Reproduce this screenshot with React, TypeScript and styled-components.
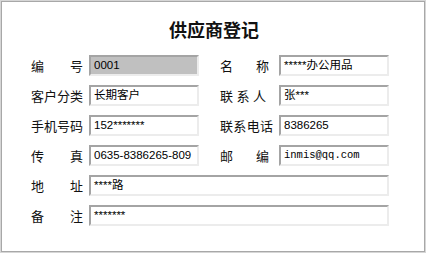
import React, { FC } from "react";
import styled, { createGlobalStyle } from "styled-components";

const GlobalStyle = createGlobalStyle`
    html, body {
        margin: 0;
        padding: 0;
        background: #d6d6d6;
    }
`

const Frame = styled.div`
    box-sizing: border-box;
    width: 424px;
    height: 251px;
    margin: 1px;
    background: #ffffff;
    border: 1px solid #a8a8a8;
    font-family: "Noto Sans CJK SC", "Liberation Sans", sans-serif;
    color: #111;
`

const Title = styled.h1`
    margin: 0;
    padding-top: 16px;
    height: 38px;
    box-sizing: border-box;
    text-align: center;
    font-size: 18px;
    line-height: 22px;
    font-weight: bold;
    padding-left: 2px;
`

const Form = styled.div`
    display: flex;
    flex-direction: column;
    gap: 9px;
    padding: 15px 0 0 29px;
`

const Row = styled.div`
    display: flex;
    gap: 21px;
    height: 21px;
`

const Field = styled.div`
    display: flex;
    align-items: center;
    gap: 6px;
`

const Label = styled.span<{ $right?: boolean }>`
    display: flex;
    width: ${p => (p.$right ? 53 : 52)}px;
    font-size: 13px;
    line-height: 21px;
    white-space: nowrap;
`

const Caption = styled.span<{ $w: number }>`
    width: ${p => p.$w}px;
    text-align: justify;
    text-align-last: justify;
`

const Input = styled.div<{ $disabled?: boolean; $mono?: boolean; $span?: boolean }>`
    box-sizing: border-box;
    width: ${p => (p.$span ? 300 : 110)}px;
    height: 21px;
    padding: 0 3px;
    border: 2px solid;
    border-color: #a4a4a4 #ececec #ececec #a4a4a4;
    background: ${p => (p.$disabled ? "#c0c0c0" : "#ffffff")};
    font-family: ${p => (p.$mono
        ? '"Liberation Mono", "Noto Sans CJK SC", monospace'
        : '"Liberation Sans", "Noto Sans CJK SC", sans-serif')};
    font-size: ${p => (p.$mono ? 10.5 : 11.5)}px;
    line-height: 17px;
    color: #000;
    white-space: nowrap;
    overflow: hidden;
`

const App: FC = () => {
    return (
        <>
            <GlobalStyle />
            <Frame>
                <Title>供应商登记</Title>
                <Form>
                    <Row>
                        <Field>
                            <Label><Caption $w={52}>编号</Caption></Label>
                            <Input $disabled>0001</Input>
                        </Field>
                        <Field>
                            <Label $right><Caption $w={49}>名称</Caption></Label>
                            <Input>*****办公用品</Input>
                        </Field>
                    </Row>
                    <Row>
                        <Field>
                            <Label><Caption $w={52}>客户分类</Caption></Label>
                            <Input>长期客户</Input>
                        </Field>
                        <Field>
                            <Label $right><Caption $w={46}>联系人</Caption></Label>
                            <Input>张***</Input>
                        </Field>
                    </Row>
                    <Row>
                        <Field>
                            <Label><Caption $w={52}>手机号码</Caption></Label>
                            <Input>152*******</Input>
                        </Field>
                        <Field>
                            <Label $right><Caption $w={53}>联系电话</Caption></Label>
                            <Input>8386265</Input>
                        </Field>
                    </Row>
                    <Row>
                        <Field>
                            <Label><Caption $w={52}>传真</Caption></Label>
                            <Input>0635-8386265-809</Input>
                        </Field>
                        <Field>
                            <Label $right><Caption $w={49}>邮编</Caption></Label>
                            <Input $mono>inmis@qq.com</Input>
                        </Field>
                    </Row>
                    <Row>
                        <Field>
                            <Label><Caption $w={52}>地址</Caption></Label>
                            <Input $span>****路</Input>
                        </Field>
                    </Row>
                    <Row>
                        <Field>
                            <Label><Caption $w={52}>备注</Caption></Label>
                            <Input $span>*******</Input>
                        </Field>
                    </Row>
                </Form>
            </Frame>
        </>
    )
}

export default App
